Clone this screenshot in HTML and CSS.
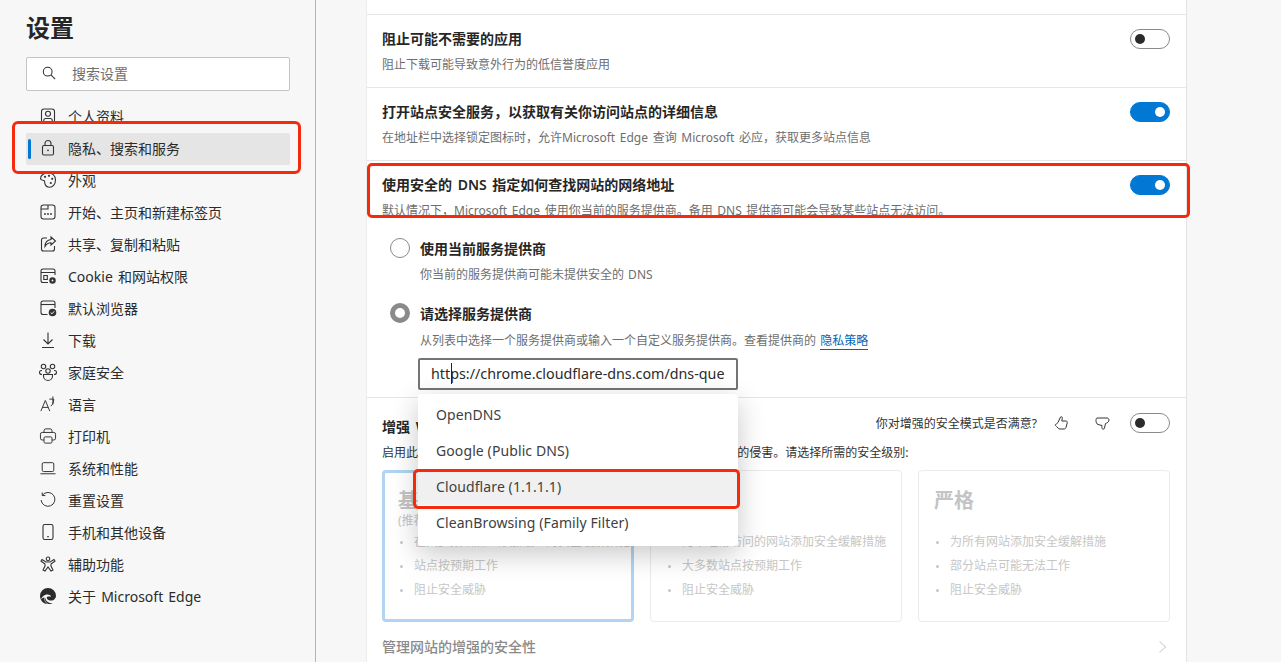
FILE: index.html
```html
<!DOCTYPE html>
<html lang="zh-CN">
<head>
<meta charset="utf-8">
<title>设置</title>
<link rel="stylesheet" href="styles.css">
</head>
<body>
<div class="app">
  <aside class="sidebar">
    <h1 class="app-title">设置</h1>
    <div class="search">
      <svg class="search-icon" viewBox="0 0 16 16"><circle cx="6.5" cy="6.5" r="5"/><path d="M10.2 10.2 15 15"/></svg>
      <span>搜索设置</span>
    </div>
    <nav class="nav">
      <a class="nav-item"><svg class="ico" viewBox="0 0 16 16"><rect x="1.5" y="1" width="13" height="14" rx="2.500"/><circle cx="8" cy="5.800" r="2.500"/><path d="M3.800 15v-2.500q0-2 2-2h4.400q2 0 2 2V15"/></svg>个人资料</a>
      <div class="frame-nav"></div>
      <a class="nav-item is-active"><svg class="ico" viewBox="0 0 16 16"><rect x="2.500" y="5.500" width="11" height="9.500" rx="1.500"/><path d="M5 5.500V3.500a3 3 0 0 1 6 0v2"/><circle class="solid" cx="8" cy="10.300" r=".9"/></svg>隐私、搜索和服务</a>
      <a class="nav-item"><svg class="ico" viewBox="0 0 16 16"><path d="M8 .8C4 .8.5 3.500.5 6.500c0 2 2.500 1.500 3.500 2s.5 2 1 3.500 2 3.200 4.500 3.200c3.500 0 6-3.200 6-7.200C15.500 3.500 12 .8 8 .8Z"/><circle class="solid" cx="5" cy="4.800" r="1.100"/><circle class="solid" cx="9" cy="3.800" r="1.100"/><circle class="solid" cx="12.200" cy="6.800" r="1.100"/><circle class="solid" cx="10.800" cy="11" r="1.100"/></svg>外观</a>
      <a class="nav-item"><svg class="ico" viewBox="0 0 16 16"><rect x="1" y="1" width="14" height="14" rx="2.500"/><path d="M1 5h7V1"/><circle class="solid" cx="5" cy="10" r=".9"/><circle class="solid" cx="8" cy="10" r=".9"/><circle class="solid" cx="11" cy="10" r=".9"/></svg>开始、主页和新建标签页</a>
      <a class="nav-item"><svg class="ico" viewBox="0 0 16 16"><path d="M7 2H3.500a2 2 0 0 0-2 2v9a2 2 0 0 0 2 2h9a2 2 0 0 0 2-2v-3"/><path d="M11 1l4.500 4L11 9V6.800C8 6.800 6.500 8 5 10.500 5 7 7 4 11 3.500Z"/></svg>共享、复制和粘贴</a>
      <a class="nav-item"><svg class="ico" viewBox="0 0 16 16"><path d="M8 14.500H3a2 2 0 0 1-2-2V3a2 2 0 0 1 2-2h10a2 2 0 0 1 2 2v4"/><path d="M1 4.500h14M3.800 7.500h3.500v4H3.800z"/><circle cx="12.500" cy="12.500" r="2.500" class="gear"/><circle cx="12.500" cy="12.500" r=".9" class="hole"/></svg>Cookie 和网站权限</a>
      <a class="nav-item"><svg class="ico" viewBox="0 0 16 16"><path d="M7.500 14.500H3a2 2 0 0 1-2-2V3a2 2 0 0 1 2-2h10a2 2 0 0 1 2 2v5"/><path d="M1 4.500h14"/><circle class="solid" cx="12.500" cy="12.500" r="3.800"/><path class="tick" d="M10.700 12.600l1.300 1.200 2.200-2.500"/></svg>默认浏览器</a>
      <a class="nav-item"><svg class="ico" viewBox="0 0 16 16"><path d="M8 .5v11M3.500 7.500 8 12l4.500-4.500M2 15.500h12"/></svg>下载</a>
      <a class="nav-item"><svg class="ico ico-wide" viewBox="0 0 18 18"><circle cx="4.500" cy="3.500" r="2.200"/><circle cx="13.500" cy="3.500" r="2.200"/><circle cx="9" cy="8" r="2.200"/><path d="M3 7.500H2.500Q.5 7.500.5 9.500t2.500 2M15 7.500h.5q2 0 2 2t-2.500 2M4.500 11.500h9v1.500a4.500 4.500 0 0 1-9 0Z"/></svg>家庭安全</a>
      <a class="nav-item"><svg class="ico" viewBox="0 0 18 18"><path d="M1 17 6 5l5 12M2.800 12.800h6.400M10.500 3.500h5c0 3-1 6-3.500 8M14.500 .5v9"/></svg>语言</a>
      <a class="nav-item"><svg class="ico" viewBox="0 0 18 18"><path d="M4.500 5V3a2 2 0 0 1 2-2h5a2 2 0 0 1 2 2v2"/><path d="M4.500 13.500H2.500a2 2 0 0 1-2-2V7a2 2 0 0 1 2-2h13a2 2 0 0 1 2 2v4.500a2 2 0 0 1-2 2h-2"/><rect x="4.500" y="10" width="9" height="7" rx="1.500"/></svg>打印机</a>
      <a class="nav-item"><svg class="ico" viewBox="0 0 18 18"><rect x="2.500" y="3" width="13" height="10" rx="1.500"/><path d="M.5 15.500h17"/></svg>系统和性能</a>
      <a class="nav-item"><svg class="ico" viewBox="0 0 18 18"><path d="M2.800 3.500A7.800 7.800 0 1 1 1.200 9"/><path d="M2.500 .5v3.500H6"/></svg>重置设置</a>
      <a class="nav-item"><svg class="ico" viewBox="0 0 16 16"><rect x="3" y=".5" width="10" height="15" rx="1.800"/><path d="M7 12.800h2"/></svg>手机和其他设备</a>
      <a class="nav-item"><svg class="ico" viewBox="0 0 16 16"><circle cx="8" cy="2.800" r="1.800"/><path d="M2 3.500 6 6h4l4-2.500 1 1.500-4 3v2l2 4-2 1-3-4-3 4-2-1 2-4V8L1 5Z"/></svg>辅助功能</a>
      <a class="nav-item"><svg class="ico ico-edge" viewBox="0 0 16 16"><path class="fill" d="M8 0a8 8 0 0 0-8 8c0 1.500.4 2.800 1 4 .5-3 3-5.500 6.500-5.500 2 0 3.500 1 3.500 2H8C7 8.500 6.500 9.300 7 10.500c.8 2 4 2.700 6.500 1.500.5-.2 1-.6 1.200-1 .2-.5 1.300-1.200 1.300-3a8 8 0 0 0-8-8Z"/><path class="fill" d="M5.200 9.800C4.500 12 5.500 15 8.500 16c1.500.1 3-.4 4-1.100-2.700.7-6.500-.5-7.300-5.100ZM.9 11.800C2 14.500 4.500 16 7.500 16c-2-1-3.600-3.500-3-6.500-1.500.3-3 1-3.600 2.300Z"/></svg>关于 Microsoft Edge</a>
    </nav>
  </aside>

  <main class="main">
    <section class="panel">
      <div class="row">
        <div class="row-text"><h2>阻止可能不需要的应用</h2><p>阻止下载可能导致意外行为的低信誉度应用</p></div>
        <span class="toggle"></span>
      </div>
      <div class="row">
        <div class="row-text"><h2>打开站点安全服务，以获取有关你访问站点的详细信息</h2><p>在地址栏中选择锁定图标时，允许Microsoft Edge 查询 Microsoft 必应，获取更多站点信息</p></div>
        <span class="toggle is-on"></span>
      </div>
      <div class="row">
        <div class="row-text"><h2>使用安全的 DNS 指定如何查找网站的网络地址</h2><p>默认情况下，Microsoft Edge 使用你当前的服务提供商。备用 DNS 提供商可能会导致某些站点无法访问。</p></div>
        <span class="toggle is-on"></span>
        <div class="frame-dns"></div>
      </div>
      <div class="dns">
        <div class="radio-line"><span class="radio"></span><strong>使用当前服务提供商</strong></div>
        <p class="radio-desc">你当前的服务提供商可能未提供安全的 DNS</p>
        <div class="radio-line second"><span class="radio is-checked"></span><strong>请选择服务提供商</strong></div>
        <p class="radio-desc lower">从列表中选择一个服务提供商或输入一个自定义服务提供商。查看提供商的 <a class="link">隐私策略</a></p>
        <div class="combo">
          <div class="combo-input">https://chrome.cloudflare-dns.com/dns-que<i class="caret"></i></div>
          <ul class="menu">
            <li>OpenDNS</li>
            <li>Google (Public DNS)</li>
            <li class="is-hover">Cloudflare (1.1.1.1)</li>
            <li>CleanBrowsing (Family Filter)</li>
          </ul>
        </div>
      </div>
      <div class="enhance">
        <div class="enhance-head">
          <h2>增强 Web 的安全性</h2>
          <span class="feedback">你对增强的安全模式是否满意?</span>
          <svg class="thumb" viewBox="0 0 16 16"><path d="M5 7.500 7.500 2c1.200-.8 2 .2 1.800 1.200L8.800 6H13c1 0 1.500 1 1.200 2l-1.200 4.500c-.3 1-1 1.500-2 1.500H7c-1 0-1.500-.5-2-1l-1.500-1.500-1-1c-.5-.7 0-1.500.8-1.500Z"/></svg>
          <svg class="thumb down" viewBox="0 0 16 16"><path d="M2 3h10c1 0 2 .8 2 2 0 2-2 3-3.500 3.500L9.500 13c-.3 1.200-1.500 1.500-2.200.8-.6-.6-.4-1.800-.3-3.300L3 9.500C1.500 9 1 7 1 5.500S1.500 3 2 3Z"/></svg>
          <span class="toggle"></span>
        </div>
        <p class="enhance-desc">启用此功能可在浏览 Web 时帮助保护免受恶意软件和其他线上威胁的侵害。请选择所需的安全级别:</p>
        <div class="levels">
          <article class="level is-selected">
            <h3>基本</h3><small>(推荐)</small>
            <ul><li>在大多数站点上添加最少的安全缓解措施</li><li>站点按预期工作</li><li>阻止安全威胁</li></ul>
          </article>
          <article class="level">
            <h3>平衡</h3><small>&nbsp;</small>
            <ul><li>为不经常访问的网站添加安全缓解措施</li><li>大多数站点按预期工作</li><li>阻止安全威胁</li></ul>
          </article>
          <article class="level">
            <h3>严格</h3><small>&nbsp;</small>
            <ul><li>为所有网站添加安全缓解措施</li><li>部分站点可能无法工作</li><li>阻止安全威胁</li></ul>
          </article>
        </div>
        <div class="manage"><span>管理网站的增强的安全性</span><svg class="chev" viewBox="0 0 10 16"><path d="M1.500 1.500 8.500 8l-7 6.500"/></svg></div>
      </div>
    </section>
  </main>
</div>
</body>
</html>
```

FILE: styles.css
```css
*, *::before, *::after { box-sizing: border-box; }
html, body { margin: 0; height: 100%; overflow: hidden; }
body {
  background: #f7f7f7;
  color: #262626;
  font-family: "Noto Sans", "Noto Sans CJK SC", sans-serif;
  font-size: 14px;
}
.app { display: flex; height: 662px; overflow: hidden; }

/* sidebar */
.sidebar {
  position: relative;
  flex: 0 0 316px;
  height: 662px;
  border-right: 1px solid #b4b4b4;
  padding: 11px 0 0 26px;
}
.app-title {
  margin: 0;
  height: 33px;
  font-size: 24px;
  line-height: 33px;
  font-weight: 600;
}
.search {
  display: flex;
  align-items: center;
  width: 264px;
  height: 34px;
  margin-top: 13px;
  padding: 0 0 3px 15px;
  gap: 16px;
  background: #fff;
  border: 1px solid #c4c4c4;
  border-radius: 2px;
  color: #6f6f6f;
}
.search-icon { width: 14px; height: 14px; fill: none; stroke: #333; stroke-width: 1.200; flex: none; }
.nav { margin-top: 10px; width: 264px; }
.nav-item {
  position: relative;
  display: flex;
  align-items: center;
  height: 32px;
  padding: 0 0 2px 14px;
  color: #2b2b2b;
  white-space: pre;
  word-spacing: 1.5px;
}
.ico { width: 16px; height: 16px; margin-right: 12px; flex: none; fill: none; stroke: #333; stroke-width: 1.100; overflow: visible; }
.ico-wide { width: 18px; height: 18px; margin-left: -1px; margin-right: 11px; }
.ico .solid { fill: #333; stroke: none; }
.ico .tick { stroke: #f7f7f7; stroke-width: 1; }
.ico .gear { fill: #333; stroke: #333; stroke-width: 1.500; }
.ico .hole { fill: #f7f7f7; stroke: none; }
.ico .fill { fill: #2b2b2b; stroke: none; }
.is-active { z-index: 2; background: #e5e5e5; border-radius: 2px; }
.is-active::before {
  content: "";
  position: absolute;
  left: 2px;
  top: 6px;
  width: 3px;
  height: 20px;
  border-radius: 2px;
  background: #0078d4;
}
.frame-nav {
  position: absolute;
  left: 12px;
  top: 121px;
  width: 289px;
  height: 53px;
  z-index: 1;
  background: #f7f7f7;
  border: 3px solid #f52a0c;
  border-radius: 6px;
}

/* main */
.main { flex: 1; padding-left: 50px; min-width: 0; }
.panel {
  width: 821px;
  height: 662px;
  background: #fff;
  border-right: 1px solid #e4e4e4;
  border-left: 1px solid #ececec;
  padding-top: 14px;
}
h2 { margin: 0; font-size: 14px; font-weight: 600; line-height: 20px; color: #262626; word-spacing: 2px; }
.row {
  position: relative;
  display: flex;
  justify-content: space-between;
  height: 73px;
  padding: 14px 16px 0 15px;
  border-top: 1px solid #e6e6e6;
}
.row-text p { margin: 6px 0 0; font-size: 12px; line-height: 20px; color: #6e6e6e; white-space: nowrap; word-spacing: 1.5px; }
.toggle {
  flex: none;
  width: 40px;
  height: 20px;
  position: relative;
  border: 1px solid #8a8a8a;
  border-radius: 10px;
  background: #fff;
}
.toggle::after {
  content: "";
  position: absolute;
  left: 4px;
  top: 4px;
  width: 10px;
  height: 10px;
  border-radius: 50%;
  background: #2b2b2b;
}
.toggle.is-on { background: #0078d4; border-color: #0078d4; }
.toggle.is-on::after { left: auto; right: 4px; background: #fff; }
.frame-dns {
  position: absolute;
  left: 0;
  top: 2px;
  width: 823px;
  height: 55px;
  border: 3px solid #f52a0c;
  border-radius: 5px;
}

/* dns */
.dns { height: 174px; padding: 15px 0 0 23px; margin-top: -10px; }
.radio-line { display: flex; align-items: center; height: 20px; gap: 10px; }
.radio-line.second { margin-top: 18px; }
.radio-line strong { font-weight: 600; }
.radio { width: 20px; height: 20px; border-radius: 50%; border: 1px solid #8a8a8a; background: #fff; flex: none; }
.radio.is-checked { border: 5px solid #8a8a8a; }
.radio-desc { margin: 7px 0 0 30px; font-size: 12px; line-height: 20px; color: #6e6e6e; word-spacing: 1px; }
.radio-desc.lower { margin-top: 8px; }
.link { color: #0067b8; border-bottom: 1px solid #0067b8; }
.combo { position: relative; margin: 7px 0 0 28px; width: 320px; z-index: 3; }
.combo-input {
  height: 32px;
  border: 2px solid #757575;
  border-radius: 2px;
  background: #fff;
  padding-left: 11px;
  font-size: 14.300px;
  line-height: 27px;
  color: #2b2b2b;
  white-space: nowrap;
  overflow: hidden;
  position: relative;
}
.caret { position: absolute; left: 31px; top: 3px; width: 1px; height: 21px; background: #222; }
.menu {
  position: absolute;
  left: 0;
  top: 36px;
  width: 320px;
  margin: 0;
  padding: 3px 0 5px;
  list-style: none;
  background: #fff;
  border-radius: 4px;
  box-shadow: 0 8px 28px rgba(0, 0, 0, .22);
}
.menu li { position: relative; height: 36px; line-height: 36px; padding-left: 18px; color: #404040; letter-spacing: .1px; }
.menu .is-hover { background: #f0f0f0; }
.menu .is-hover::after {
  content: "";
  position: absolute;
  left: -5px;
  top: 0;
  width: 327px;
  height: 40px;
  border: 3px solid #f52a0c;
  border-radius: 5px;
}

/* enhance */
.enhance { border-top: 1px solid #e6e6e6; padding: 14px 16px 0 15px; }
.enhance-head { display: flex; align-items: center; height: 22px; }
.enhance-head h2 { flex: 1; margin-top: 8px; }
.feedback { font-size: 12px; color: #333; }
.thumb { width: 16px; height: 16px; margin-left: 16px; fill: none; stroke: #333; stroke-width: 1; }
.thumb.down { margin-left: 26px; margin-right: 19px; }
.enhance-desc { margin: 9px 0 0; font-size: 12px; line-height: 20px; color: #333; white-space: nowrap; }
.levels { display: grid; grid-template-columns: repeat(3, 252px); gap: 16px; margin-top: 7px; }
.level {
  height: 152px;
  border: 1px solid #ebebeb;
  border-radius: 4px;
  padding: 15px;
  color: #c6c6c6;
}
.level.is-selected { border: 3px solid #b0d4f1; padding: 13px; }
.level h3 { margin: 1px 0 0; font-size: 20px; line-height: 27px; font-weight: 700; color: #c4c4c4; }
.level small { display: block; font-size: 12px; line-height: 14px; }
.level ul { margin: 2px 0 0; padding: 0 0 0 2px; list-style: none; font-size: 12px; }
.level li { position: relative; height: 24px; line-height: 24px; padding-left: 14px; white-space: nowrap; }
.level li::before {
  content: "";
  position: absolute;
  left: 0;
  top: 11px;
  width: 3px;
  height: 3px;
  border-radius: 50%;
  background: #c6c6c6;
}
.manage { display: flex; align-items: center; justify-content: space-between; height: 24px; margin-top: 12px; color: #8a8a8a; font-weight: 500; }
.chev { width: 9px; height: 14px; margin: 2px 3px 0 0; fill: none; stroke: #d4d4d4; stroke-width: 1.200; }
```
